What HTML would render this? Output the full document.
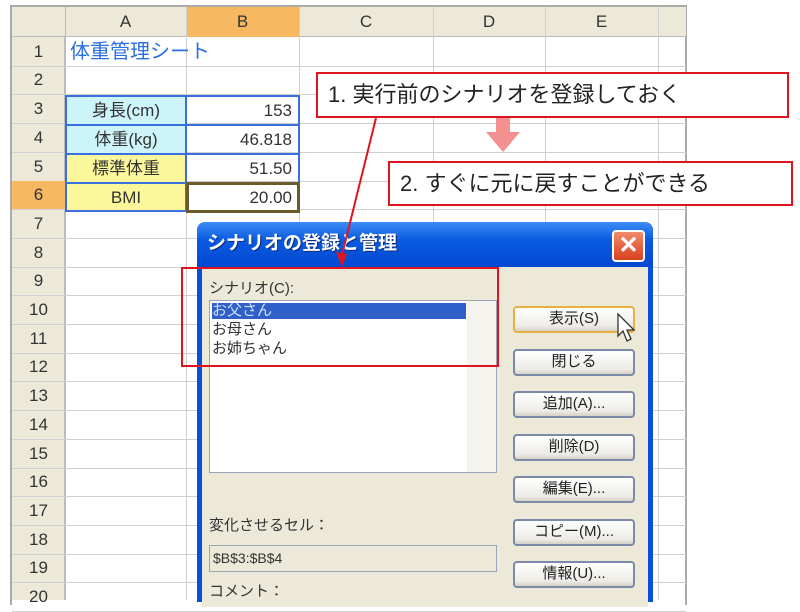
<!DOCTYPE html>
<html><head><meta charset="utf-8"><style>
*{margin:0;padding:0;box-sizing:border-box}
body{width:800px;height:600px;background:#fff;position:relative;overflow:hidden;font-family:"Liberation Sans","Noto Sans CJK JP",sans-serif}
.a{position:absolute}
.hl{position:absolute;height:1px;background:#d0d0d0}
.vl{position:absolute;width:1px;background:#d0d0d0}
.hdr{position:absolute;background:#ece9d8;color:#333;font-size:17px;text-align:center}
.rn{position:absolute;left:12px;width:53px;text-align:center;font-size:17px;color:#333}
.btn{position:absolute;left:513px;width:122px;height:27px;border:2px solid #7a8aa8;border-radius:4px;background:linear-gradient(#fff,#ecebe6 80%,#d6d0c5);font-size:15px;text-align:center;line-height:22px;color:#222}
.box{position:absolute;border:2px solid #e0141e;background:#fff;font-size:22px;color:#222;padding-left:10px}
</style></head><body>
<div class="a" style="left:10px;top:5px;width:677px;height:600px;border:2px solid #aaa;border-bottom:none;background:#fff"></div>
<div class="hdr" style="left:12px;top:7px;width:674px;height:30px;border-bottom:1px solid #bbb"></div>
<div class="hdr" style="left:12px;top:37px;width:53px;height:563px;border-right:1px solid #bbb"></div>
<div class="hdr" style="left:186px;top:7px;width:113px;height:30px;background:#f7b862;line-height:30px">B</div>
<div class="hdr" style="left:65px;top:7px;width:121px;height:30px;line-height:30px;background:transparent">A</div>
<div class="hdr" style="left:299px;top:7px;width:134px;height:30px;line-height:30px;background:transparent">C</div>
<div class="hdr" style="left:433px;top:7px;width:112px;height:30px;line-height:30px;background:transparent">D</div>
<div class="hdr" style="left:545px;top:7px;width:113px;height:30px;line-height:30px;background:transparent">E</div>
<div class="vl" style="left:65px;top:7px;height:593px;background:#bbb"></div>
<div class="vl" style="left:186px;top:7px;height:593px"></div>
<div class="vl" style="left:299px;top:7px;height:593px"></div>
<div class="vl" style="left:433px;top:7px;height:593px"></div>
<div class="vl" style="left:545px;top:7px;height:593px"></div>
<div class="vl" style="left:658px;top:7px;height:593px"></div>
<div id="rows"></div>
<script>
var h='';for(var i=1;i<=20;i++){var t=Math.round(37+(i-1)*28.7);var b=Math.round(37+i*28.7);h+='<div class="hl" style="left:12px;top:'+b+'px;width:674px"></div>';h+='<div class="rn" style="top:'+t+'px;height:'+(b-t)+'px;line-height:'+(b-t)+'px;'+(i==6?'background:#f7b862':'')+'">'+i+'</div>';}
document.getElementById('rows').innerHTML=h;
</script>
<div class="a" style="left:70px;top:38px;font-size:20px;color:#2a6fe0;line-height:28px">体重管理シート</div>
<div class="a" style="left:66px;top:96px;width:120px;height:58px;background:#cdf4f8"></div>
<div class="a" style="left:66px;top:154px;width:120px;height:58px;background:#fdf79c"></div>
<div class="a" style="left:65px;top:95px;width:235px;height:117px;border:2px solid #3a6fe0"></div>
<div class="a" style="left:65px;top:124px;width:235px;height:2px;background:#3a6fe0"></div>
<div class="a" style="left:65px;top:153px;width:235px;height:2px;background:#3a6fe0"></div>
<div class="a" style="left:65px;top:182px;width:235px;height:2px;background:#3a6fe0"></div>
<div class="a" style="left:185px;top:95px;width:2px;height:117px;background:#3a6fe0"></div>
<div class="a" style="left:186px;top:182px;width:114px;height:31px;border:3px solid #6b5a2a;background:#fff"></div>
<div class="a" style="left:66px;top:96px;width:120px;font-size:17px;text-align:center;line-height:29px;color:#333">身長(cm)<br>体重(kg)<br>標準体重<br>BMI</div>
<div class="a" style="left:190px;top:96px;width:102px;font-size:17px;text-align:right;line-height:29px;color:#333">153<br>46.818<br>51.50<br>20.00</div>
<div class="a" style="left:197px;top:222px;width:456px;height:380px;background:#0a4fd8;border-radius:8px 8px 0 0"></div>
<div class="a" style="left:197px;top:222px;width:456px;height:45px;background:linear-gradient(#3d8cf5,#0a5ae0 40%,#0348d0);border-radius:8px 8px 0 0"></div>
<div class="a" style="left:207px;top:230px;font-size:19px;font-weight:bold;color:#fff;line-height:28px;text-shadow:1px 1px #0a2a80">シナリオの登録と管理</div>
<div class="a" style="left:612px;top:230px;width:33px;height:32px;background:linear-gradient(#f08a6a,#d8401e);border:2px solid #fff;border-radius:4px;color:#fff;font-size:24px;font-weight:bold;text-align:center;line-height:27px">✕</div>
<div class="a" style="left:202px;top:267px;width:446px;height:340px;background:#ece9d8"></div>
<div class="a" style="left:209px;top:277px;font-size:15px;color:#333">シナリオ(C):</div>
<div class="a" style="left:209px;top:300px;width:288px;height:173px;border:1px solid #9aa6b8;background:#fff"></div>
<div class="a" style="left:467px;top:301px;width:29px;height:171px;background:#f4f3ee"></div>
<div class="a" style="left:212px;top:303px;width:254px;height:16px;background:#2f5fc8"></div>
<div class="a" style="left:212px;top:301px;font-size:15px;line-height:19px;color:#333"><span style="color:#cfe0ff">お父さん</span><br>お母さん<br>お姉ちゃん</div>
<div class="btn" style="top:306px;border-color:#e8b040">表示(S)</div>
<div class="btn" style="top:349px">閉じる</div>
<div class="btn" style="top:391px">追加(A)...</div>
<div class="btn" style="top:434px">削除(D)</div>
<div class="btn" style="top:476px">編集(E)...</div>
<div class="btn" style="top:519px">コピー(M)...</div>
<div class="btn" style="top:561px">情報(U)...</div>
<svg class="a" style="left:616px;top:312px" width="22" height="34"><path d="M2 2 L2 24 L7 19 L11 29 L15 27 L11 18 L18 18 Z" fill="#fff" stroke="#333" stroke-width="1.3"/></svg>
<div class="a" style="left:209px;top:514px;font-size:15px;color:#333">変化させるセル：</div>
<div class="a" style="left:209px;top:545px;width:288px;height:27px;border:1px solid #9aa6b8;background:#ece9d8;font-size:14px;line-height:25px;padding-left:3px;color:#333">$B$3:$B$4</div>
<div class="a" style="left:209px;top:580px;font-size:15px;color:#333">コメント：</div>
<div class="a" style="left:181px;top:267px;width:318px;height:100px;border:2px solid #e0141e"></div>
<div class="box" style="left:316px;top:72px;width:473px;height:46px;line-height:42px">1. 実行前のシナリオを登録しておく</div>
<div class="box" style="left:388px;top:161px;width:405px;height:45px;line-height:41px">2. すぐに元に戻すことができる</div>
<svg class="a" style="left:0;top:0" width="800" height="600">
<path d="M496 118 h14 v14 h10 l-17 20 l-17 -20 h10 z" fill="#f59090"/>
<line x1="376" y1="118" x2="342" y2="255" stroke="#e0141e" stroke-width="2"/>
<path d="M336 252 l6 15 l5 -13 z" fill="#e0141e"/>
</svg>
</body></html>
